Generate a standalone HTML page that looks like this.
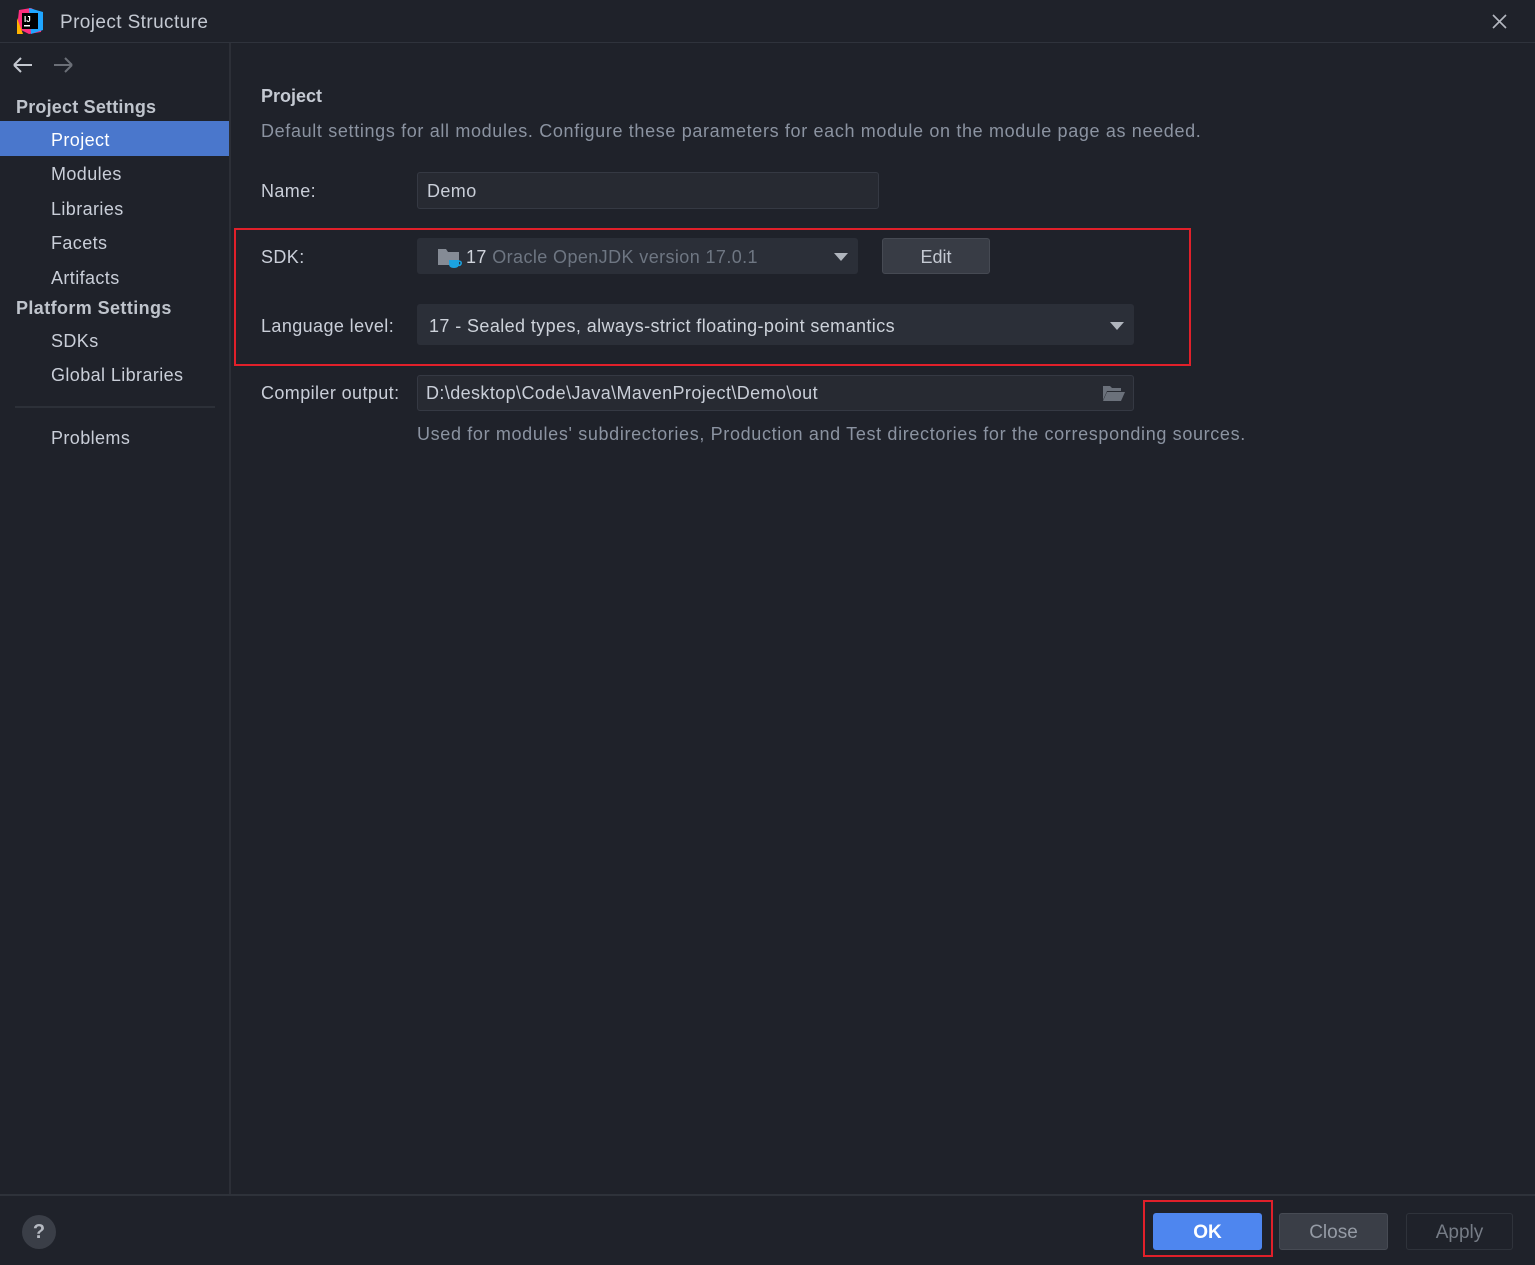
<!DOCTYPE html>
<html><head><meta charset="utf-8"><style>
*{margin:0;padding:0;box-sizing:border-box}
body{width:1535px;height:1265px;background:#1f222a;font-family:"Liberation Sans","Noto Sans CJK SC",sans-serif;color:#c9ced8;position:relative;overflow:hidden;font-size:18px}
.a{position:absolute;white-space:nowrap}
.t{margin-top:2px}
.s{letter-spacing:0.4px}
.field{position:absolute;background:#2b2f38;border-radius:3px}
</style></head><body>
<div class="a" style="left:0;top:42px;width:1535px;height:1px;background:#2f333c"></div>
<svg class="a" style="left:17px;top:8px" width="26" height="26" viewBox="0 0 26 26">
<polygon points="2,2 14,0 26,6 24,24 12,26 0,20" fill="#ff2e7e"/>
<polygon points="12,0 26,4 26,22 14,26" fill="#1fa6ff"/>
<polygon points="0,10 6,26 0,26" fill="#ffb300"/>
<rect x="5" y="5" width="16" height="16" fill="#000"/>
<text x="7" y="14" font-size="8" fill="#fff" font-family="Liberation Sans" font-weight="bold">IJ</text>
<rect x="7" y="17" width="6" height="1.5" fill="#fff"/>
</svg>
<div class="a t s" style="left:60px;top:10px;font-size:19px;color:#c4c9d2">Project Structure</div>
<svg class="a" style="left:1492px;top:14px" width="15" height="15"><path d="M1 1L14 14M14 1L1 14" stroke="#b4b8c0" stroke-width="1.6"/></svg>
<div class="a" style="left:229px;top:43px;width:2px;height:1152px;background:#2c2f37"></div>
<svg class="a" style="left:12px;top:56px" width="22" height="18"><path d="M2 9H20M2 9L9 2M2 9L9 16" stroke="#c4c8d0" stroke-width="2" fill="none"/></svg>
<svg class="a" style="left:52px;top:56px" width="22" height="18"><path d="M2 9H20M20 9L13 2M20 9L13 16" stroke="#6b6f77" stroke-width="2" fill="none"/></svg>
<div class="a t" style="left:16px;top:95px;font-weight:bold;color:#bfc4cc;letter-spacing:0.2px">Project Settings</div>
<div class="a" style="left:0;top:121px;width:229px;height:35px;background:#4a77cc"></div>
<div class="a t s" style="left:51px;top:128px;color:#fff">Project</div>
<div class="a t s" style="left:51px;top:162px">Modules</div>
<div class="a t s" style="left:51px;top:197px">Libraries</div>
<div class="a t s" style="left:51px;top:231px">Facets</div>
<div class="a t s" style="left:51px;top:266px">Artifacts</div>
<div class="a t" style="left:16px;top:296px;font-weight:bold;color:#bfc4cc;letter-spacing:0.4px">Platform Settings</div>
<div class="a t s" style="left:51px;top:329px">SDKs</div>
<div class="a t s" style="left:51px;top:363px">Global Libraries</div>
<div class="a" style="left:15px;top:406px;width:200px;height:2px;background:#2c3038"></div>
<div class="a t s" style="left:51px;top:426px">Problems</div>
<div class="a t" style="left:261px;top:84px;font-weight:bold;color:#c4c9d2">Project</div>
<div class="a t" style="left:261px;top:119px;color:#8b93a1;letter-spacing:0.65px">Default settings for all modules. Configure these parameters for each module on the module page as needed.</div>
<div class="a t s" style="left:261px;top:179px">Name:</div>
<div class="field" style="left:417px;top:172px;width:462px;height:37px;background:#272a32;border:1px solid #353943"></div>
<div class="a t s" style="left:427px;top:179px">Demo</div>
<div class="a" style="left:234px;top:228px;width:957px;height:138px;border:2px solid #e0202a"></div>
<div class="a t s" style="left:261px;top:245px">SDK:</div>
<div class="field" style="left:417px;top:238px;width:441px;height:36px"></div>
<svg class="a" style="left:437px;top:247px" width="26" height="24"><path d="M1 2H9L11 5H22V18H1Z" fill="#858b95"/><path d="M12 13H22V17Q22 21 17 21Q12 21 12 17Z" fill="#1ba2e0"/><path d="M21 14Q25 14 24 17Q23 19 21 18" stroke="#1ba2e0" stroke-width="1.5" fill="none"/></svg>
<div class="a t s" style="left:466px;top:245px;color:#d0d4dc">17 <span style="color:#6e7682">Oracle OpenJDK version 17.0.1</span></div>
<svg class="a" style="left:834px;top:253px" width="14" height="8"><path d="M0 0H14L7 8Z" fill="#b0b5bd"/></svg>
<div class="a" style="left:882px;top:238px;width:108px;height:36px;background:#383c45;border:1px solid #464a53;border-radius:3px;text-align:center;line-height:36px;color:#c4c9d2">Edit</div>
<div class="a t s" style="left:261px;top:314px">Language level:</div>
<div class="field" style="left:417px;top:304px;width:717px;height:41px"></div>
<div class="a t s" style="left:429px;top:314px;color:#cdd2da">17 - Sealed types, always-strict floating-point semantics</div>
<svg class="a" style="left:1110px;top:322px" width="14" height="8"><path d="M0 0H14L7 8Z" fill="#b0b5bd"/></svg>
<div class="a t s" style="left:261px;top:381px">Compiler output:</div>
<div class="field" style="left:417px;top:375px;width:717px;height:36px;background:#272a32;border:1px solid #353943"></div>
<div class="a t s" style="left:426px;top:381px">D:\desktop\Code\Java\MavenProject\Demo\out</div>
<svg class="a" style="left:1102px;top:384px" width="24" height="18"><path d="M1 2H8L10 4H19V7H5L1 16Z" fill="#6b717b"/><path d="M5 8H23L19 17H1Z" fill="#6b717b"/></svg>
<div class="a t" style="left:417px;top:422px;color:#8b93a1;letter-spacing:0.65px">Used for modules' subdirectories, Production and Test directories for the corresponding sources.</div>
<div class="a" style="left:0;top:1194px;width:1535px;height:2px;background:#2e323a"></div>
<div class="a" style="left:22px;top:1215px;width:34px;height:34px;border-radius:50%;background:#3a3e47;color:#b6bac2;text-align:center;line-height:34px;font-weight:bold;font-size:20px">?</div>
<div class="a" style="left:1143px;top:1200px;width:130px;height:57px;border:2px solid #e0202a"></div>
<div class="a" style="left:1153px;top:1213px;width:109px;height:37px;background:#4e86ef;border-radius:3px;text-align:center;line-height:39px;color:#fff;font-weight:bold;font-size:19px">OK</div>
<div class="a" style="left:1279px;top:1213px;width:109px;height:37px;background:#3a3e47;border:1px solid #474b54;border-radius:3px;text-align:center;line-height:37px;color:#959ba5;font-size:19px">Close</div>
<div class="a" style="left:1406px;top:1213px;width:107px;height:37px;border:1px solid #2f333b;border-radius:3px;text-align:center;line-height:37px;color:#767c86;font-size:19px">Apply</div>
</body></html>
